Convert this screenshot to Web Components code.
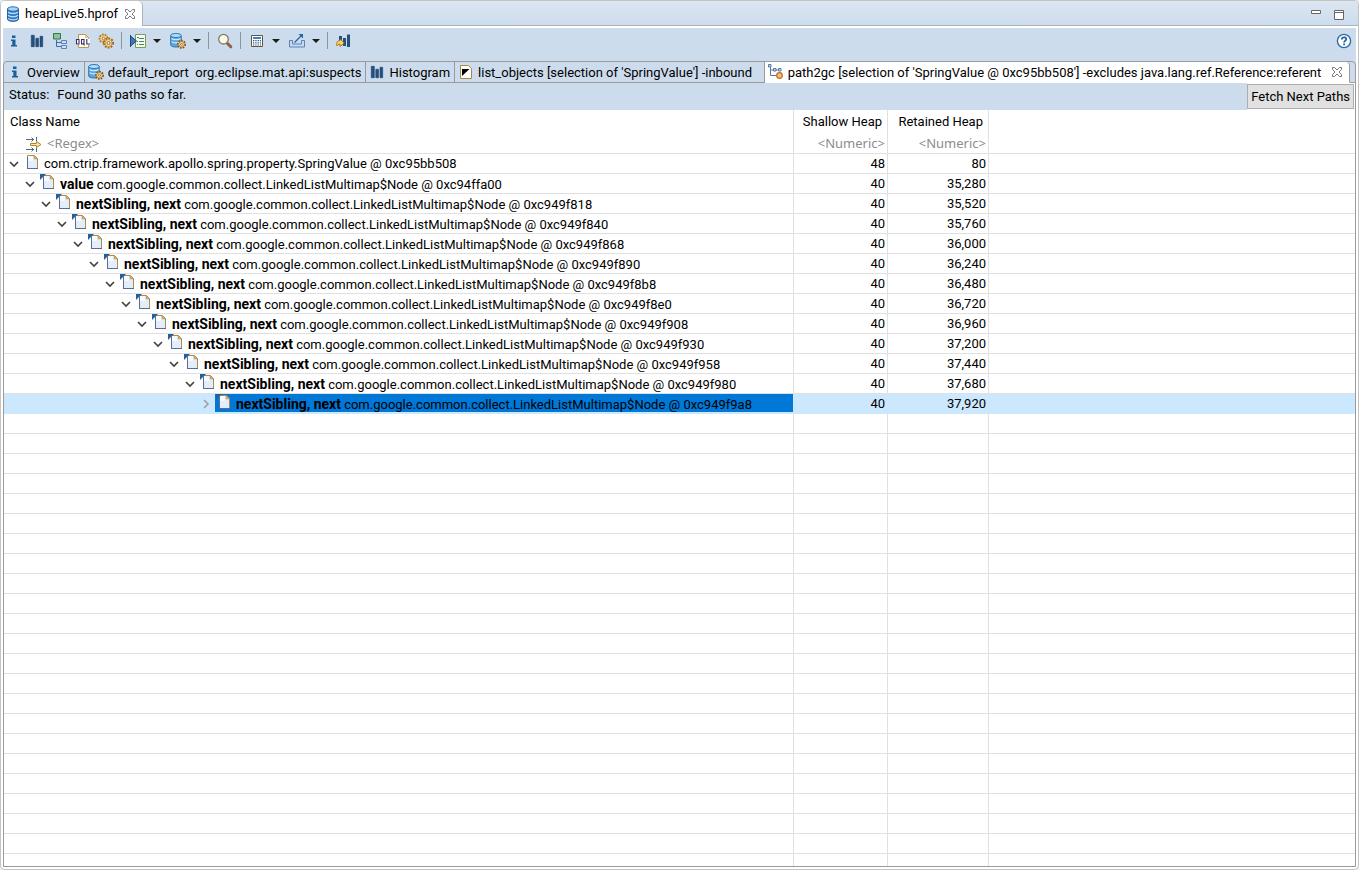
<!DOCTYPE html>
<html lang="en">
<head>
<meta charset="utf-8">
<title>heapLive5.hprof - Memory Analyzer</title>
<style>
  html, body { height: 100%; margin: 0; }
  body { background: #e4eaf4; font: 13px/20px Roboto, "Noto Sans", sans-serif; color: #000; }
</style>
</head>
<body>
<mat-editor></mat-editor>

<script>
const ICONS = {
  db: `<path fill="#2f78c4" stroke="#1c5a9e" d="M2.500 3v10c0 1.400 2.300 2.300 5.500 2.300s5.500-.9 5.500-2.300V3z"/><ellipse cx="8" cy="3" rx="5.500" ry="2.200" fill="#a9d4f5" stroke="#2a6db2"/><path fill="none" stroke="#b5dcf8" stroke-width="1.400" d="M3 6c.8 1 2.600 1.500 5 1.500s4.200-.5 5-1.500M3 9.200c.8 1 2.600 1.500 5 1.500s4.200-.5 5-1.500M3 12.400c.8 1 2.600 1.500 5 1.500s4.200-.5 5-1.500"/>`,
  info: `<path fill="#1d5f9c" d="M6 2.500h3.500v2.500H6zM5 6.500h4.500V12H11v1.500H5V12h1.300V8H5z"/>`,
  bars: `<path fill="#24507f" stroke="#1b3f6b" stroke-width=".6" d="M2.300 2.300h3v11.400h-3zM6.800 5.300h2.700v8.400H6.800zM11 3.300h2.700v10.400H11z"/>`,
  tree: `<path fill="none" stroke="#3f6cab" d="M4.500 7v6.500H10M4.500 9.500H10"/><path fill="#8cc49a" stroke="#33784a" d="M1.500.5h7v5.500h-7z"/><path fill="#cfe0f4" stroke="#5b83bb" d="M9.500 7.500h5v3h-5zM9.500 12.500h5v3h-5z"/>`,
  oql: `<path fill="#fffdf3" stroke="#b59a50" d="M3.500 1.500h7l3 3v10h-10z"/><path fill="#e9c878" d="M10 1.500v3.500h3.500z"/><path fill="#fff" d="M1 6h14v6H1z"/><path fill="none" stroke="#3b2b66" stroke-width="1.100" d="M1.500 6.500H4v4.500H1.500zM6.500 6.500H9v4.500H6.500zM8 10l1.500 2.500M11.800 6v5H15"/>`,
  gears: `<circle cx="5.500" cy="5.500" r="4" fill="#f3d591" stroke="#a8752a" stroke-width="1.800" stroke-dasharray="1.700 1.100"/><circle cx="5.500" cy="5.500" r="1.300" fill="#fff" stroke="#a8752a"/><circle cx="10.500" cy="10" r="4.600" fill="#f7dfa4" stroke="#9a6420" stroke-width="1.900" stroke-dasharray="1.800 1.200"/><circle cx="10.500" cy="10" r="3.500" fill="#f7dfa4" stroke="#b98532" stroke-width=".8"/><circle cx="10.500" cy="10" r="1.500" fill="#fff" stroke="#9a6420"/>`,
  query: `<path fill="#f4fbef" stroke="#7f9a52" d="M5.500 1.500h10v13h-10z"/><path stroke="#48876a" d="M9 5.500h5M9 8.500h5M9 11.500h5M7 4.500h2M7 8.500h1M7 11.500h1"/><path fill="#3b78b6" stroke="#174a80" d="M.5 3v10l6-5z"/><path stroke="#174a80" d="M.5 2v12"/>`,
  dbgear: `<path fill="#5aa6dd" stroke="#2d75b8" d="M.7 2.500v9.500c0 1 2.100 2 5.300 2s5.200-1 5.200-2V2.500z"/><ellipse cx="6" cy="2.500" rx="5.300" ry="2" fill="#b9dff8" stroke="#2d75b8"/><path fill="none" stroke="#c8e8fc" stroke-width="1.200" d="M1.500 5.500c1.500 1.500 7.500 1.500 9 0M1.500 8.700c1.500 1.500 7.500 1.500 9 0"/><circle cx="11.500" cy="11.300" r="3.600" fill="#f7dfa4" stroke="#86571c" stroke-width="1.800" stroke-dasharray="1.600 1.100"/><circle cx="11.500" cy="11.300" r="2.800" fill="#f9e3b4" stroke="#9d6a26" stroke-width=".8"/><circle cx="11.500" cy="11.300" r="1" fill="#fff" stroke="#86571c" stroke-width=".8"/>`,
  search: `<path stroke="#8a5f45" stroke-width="3" stroke-linecap="round" d="M10.500 10.500l3.300 3.300"/><circle cx="6.500" cy="6.200" r="4.800" fill="#fbf8e6" stroke="#80796a" stroke-width="1.300"/>`,
  calc: `<path fill="#fff" stroke="#5f563c" d="M2.500 2.500h11v11h-11z"/><path fill="#3d83bd" d="M4 4h8v2H4z"/><path stroke="#2e5573" stroke-width="1.200" stroke-dasharray="1.300 1" d="M4 7.700h8M4 9.900h8M4 12h8"/>`,
  exp: `<path fill="#c6daf0" stroke="#5b83b5" d="M.5 7.500h3v3.500h9V7.500h3v6.500H.5z"/><path fill="none" stroke="#2367a6" stroke-width="1.300" d="M5.500 9.500l7-7"/><path fill="#2367a6" d="M9.500 1H14v4.500z"/>`,
  histnext: `<path fill="#24507f" d="M3 3h3v6H3zM7 5h3v8H7zM11 1.500h3V14h-3z"/><path fill="#f8d669" stroke="#a87417" d="M4 7.500c-2.500.3-4 2-3 5.300.5-1 1.500-1.600 3-1.600v2.300l4.200-3.500L4.500 6.200z"/>`,
  help: `<circle cx="8" cy="8" r="6.600" fill="#fff" stroke="#2f6ca5" stroke-width="1.400"/><path fill="none" stroke="#2a659f" stroke-width="1.800" d="M5.800 6.500c0-3 4.500-2.800 4.500-.4 0 1.500-2.200 1.700-2.200 3.300"/><path fill="#2a659f" d="M7.200 10.500H9v1.700H7.200z"/>`,
  inbound: `<path fill="#fffef6" stroke="#a68a4a" d="M2.500 1.500h8l3 3v10h-11z"/><path fill="#fff" d="M4 5h8v7H4z"/><path fill="#000" d="M4 5h7.500L4 12z"/>`,
  path: `<path fill="none" stroke="#5678a8" d="M2.500 3v8.500H9M2.500 6H12"/><path fill="#c5dbf3" stroke="#5678a8" d="M.5.500H3V3H.5zM5.500 4.500H8V7H5.500zM10.500 4.500H13V7h-2.500z"/><circle cx="11.500" cy="11.500" r="2.800" fill="#fbbd76" stroke="#bd6c20" stroke-width="1.200"/>`,
  page: `<path fill="#e3edfb" stroke="#ab8c4c" d="M3.500 1.500h7l3 3v10h-10z"/><path fill="#fff" d="M4 2h5v5H4z" opacity=".7"/><path fill="#e3bd67" stroke="#ab8c4c" stroke-width=".7" d="M10.200 1.700v3.100h3.100z"/><path stroke="#5d6b94" d="M3.500 3v12M3 14.500h11"/>`,
  pageref: `<path fill="#e3edfb" stroke="#ab8c4c" d="M3.500 1.500h7l3 3v10h-10z"/><path fill="#fff" d="M4 2h5v5H4z" opacity=".7"/><path fill="#e3bd67" stroke="#ab8c4c" stroke-width=".7" d="M10.200 1.700v3.100h3.100z"/><path stroke="#5d6b94" d="M3.500 3v12M3 14.500h11"/><path fill="#22619c" d="M0 0h6L0 6z"/>`,
  filter: `<path fill="none" stroke="#4d6683" d="M0 3.500h8M0 13.500h8M5.500 1.500l2 2-2 2M5.500 11.500l2 2-2 2M10.500 1v4M10.500 12v4"/><path fill="#fbe7b0" stroke="#b58422" d="M4.500 7.500h6v-2l4.500 3-4.500 3v-2h-6z"/>`,
  open: `<path fill="none" stroke="#404040" stroke-width="1.600" d="M4 6l4 4 4-4"/>`,
  closed: `<path fill="none" stroke="#a0a0a0" stroke-width="1.600" d="M6 4l4 4-4 4"/>`,
  close: `<path fill="#fff" stroke="#777" d="M3.500 3.500h2L8 6l2.500-2.500h2v2L10 8l2.500 2.500v2h-2L8 10l-2.500 2.500h-2v-2L6 8 3.500 5.500z"/>`,
  arrow: `<path fill="#1c1c1c" d="M4 6h8L8 10z"/>`,
  min: `<path fill="#fff" stroke="#666" d="M3.500 3.500h9v3h-9z"/>`,
  max: `<path fill="#fff" stroke="#666" d="M3.500 3.500h9v9h-9zM3.500 5.500h9"/>`
};

class MatIcon extends HTMLElement {
  connectedCallback() {
    if (this.shadowRoot) return;
    this.attachShadow({ mode: "open" }).innerHTML = `
      <style>:host{display:block;flex:none;width:16px;height:16px;white-space:normal} svg{display:block}</style>
      <svg width="16" height="16" viewBox="0 0 16 16" aria-hidden="true">${ICONS[this.getAttribute("name")]}</svg>`;
  }
}
customElements.define("mat-icon", MatIcon);

class ToolButton extends HTMLElement {
  connectedCallback() {
    if (this.shadowRoot) return;
    const label = this.getAttribute("label");
    const menu = this.hasAttribute("menu");
    this.attachShadow({ mode: "open" }).innerHTML = `
      <style>
        :host{display:flex;flex:none}
        :host([menu]) .main{width:24px}
        button{all:unset;box-sizing:border-box;display:flex;justify-content:center;align-items:center;width:23px;height:24px;overflow:hidden}
        button:hover{background:#e3edf8}
        .drop{width:14px}
      </style>
      <button class="main" aria-label="${label}"><mat-icon name="${this.getAttribute("icon")}"></mat-icon></button>
      ${menu ? `<button class="drop" aria-label="${label} menu"><mat-icon name="arrow"></mat-icon></button>` : ""}`;
  }
}
customElements.define("tool-button", ToolButton);

class MatToolbar extends HTMLElement {
  connectedCallback() {
    if (this.shadowRoot) return;
    this.attachShadow({ mode: "open" }).innerHTML = `
      <style>
        :host{display:flex;align-items:center;height:25px;margin:0 1px 0 -1px;padding-bottom:8px}
        .sep{flex:none;width:1px;height:17px;margin:0 4px;background:#8d959e}
        .pair{display:flex;gap:2px}
        .end{margin-left:auto}
      </style>
      <tool-button icon="info" label="Overview"></tool-button>
      <tool-button icon="bars" label="Histogram"></tool-button>
      <tool-button icon="tree" label="Dominator tree"></tool-button>
      <tool-button icon="oql" label="Object query"></tool-button>
      <tool-button icon="gears" label="Thread overview"></tool-button>
      <span class="sep"></span>
      <div class="pair">
        <tool-button icon="query" label="Run reports" menu></tool-button>
        <tool-button icon="dbgear" label="Query browser" menu></tool-button>
      </div>
      <span class="sep"></span>
      <tool-button icon="search" label="Find object"></tool-button>
      <span class="sep"></span>
      <div class="pair">
        <tool-button icon="calc" label="Calculate retained size" menu></tool-button>
        <tool-button icon="exp" label="Export" menu></tool-button>
      </div>
      <span class="sep"></span>
      <tool-button icon="histnext" label="Compare"></tool-button>
      <tool-button class="end" icon="help" label="Help"></tool-button>`;
  }
}
customElements.define("mat-toolbar", MatToolbar);

class PageTab extends HTMLElement {
  connectedCallback() {
    if (this.shadowRoot) return;
    const active = this.hasAttribute("active");
    this.attachShadow({ mode: "open" }).innerHTML = `
      <style>
        :host{display:flex;flex:none;align-items:center;box-sizing:border-box;height:21px;padding:0 4px 0 3px;border-right:1px solid #9a9a9a;border-bottom:1px solid #9a9a9a}
        :host([wide]){flex:1 0 auto}
        :host([active]){background:#fff;border-bottom-color:#fff;border-radius:0 4px 0 0}
        button{all:unset;display:flex;gap:4px;white-space:pre;height:20px;line-height:22px}
        mat-icon{margin-top:2px}
        .x{margin-left:auto}
      </style>
      <button role="tab" aria-selected="${active}"><mat-icon name="${this.getAttribute("icon")}"></mat-icon><slot></slot></button>
      ${active ? `<button class="x" aria-label="Close page"><mat-icon name="close"></mat-icon></button>` : ""}`;
  }
}
customElements.define("page-tab", PageTab);

class StatusBar extends HTMLElement {
  connectedCallback() {
    if (this.shadowRoot) return;
    this.attachShadow({ mode: "open" }).innerHTML = `
      <style>
        :host{display:flex;height:27px;background:#fff}
        .msg{flex:1;display:flex;gap:8px;padding:2px 5px;background:#cddcec}
        button{flex:none;box-sizing:border-box;height:25px;margin:1px 1px 0 0;padding:0 3px;border:1px solid #adadad;border-radius:0;outline:0;background:#e1e1e1;font:inherit;color:inherit}
      </style>
      <div class="msg"><span>Status:</span><span><slot></slot></span></div>
      <button>Fetch Next Paths</button>`;
  }
}
customElements.define("status-bar", StatusBar);

const NODE = "com.google.common.collect.LinkedListMultimap$Node @ ";
const ROWS = [
  ["", "com.ctrip.framework.apollo.spring.property.SpringValue @ 0xc95bb508", "48", "80"],
  ["value", NODE + "0xc94ffa00", "40", "35,280"],
  ...[["818","35,520"],["840","35,760"],["868","36,000"],["890","36,240"],["8b8","36,480"],["8e0","36,720"],
      ["908","36,960"],["930","37,200"],["958","37,440"],["980","37,680"],["9a8","37,920"]]
    .map(([id, heap]) => ["nextSibling, next", NODE + "0xc949f" + id, "40", heap])
];

class HeapTree extends HTMLElement {
  connectedCallback() {
    if (this.shadowRoot) return;
    const last = ROWS.length - 1;
    const rows = ROWS.map(([field, name, shallow, retained], i) => `
      <tr class="${i === last ? "selected" : ""}">
        <td><div class="node" style="--depth:${i}">
          <button aria-label="${i === last ? "Expand" : "Collapse"}"><mat-icon name="${i === last ? "closed" : "open"}"></mat-icon></button>
          <div class="label"><mat-icon name="${i ? "pageref" : "page"}"></mat-icon><span>${field ? `<b>${field}</b> ` : ""}${name}</span></div>
        </div></td>
        <td>${shallow}</td><td>${retained}</td><td></td>
      </tr>`).join("");
    this.attachShadow({ mode: "open" }).innerHTML = `
      <style>
        :host{display:flex;flex-direction:column;min-height:0;overflow:hidden;background:#fff;--line:#e0e0e0}
        table{flex:none;width:100%;table-layout:fixed;border-collapse:separate;border-spacing:0}
        .c1{width:790px}.c2{width:94px}.c3{width:101px}
        th,td{box-sizing:border-box;padding:0 2px 0 0;text-align:right;font-weight:400;white-space:nowrap;border-right:1px solid var(--line)}
        th:first-child,td:first-child{text-align:left;padding:0}
        th:last-child,td:last-child{border-right:0}
        td{height:20px;line-height:19px;border-bottom:1px solid var(--line)}
        thead th{height:24px;padding:0 5px 0 6px}
        thead th:first-child{padding:0 5px 0 6px}
        .filter{display:flex;align-items:center;gap:5px;padding-left:22px}
        input{all:unset;box-sizing:border-box;width:100%;height:19px;line-height:19px;text-align:inherit;font-family:"Noto Sans",sans-serif}
        input::placeholder{color:#8c8c8c;opacity:1}
        .node{display:flex;height:19px;padding-left:calc(2px + 16px * var(--depth))}
        .node button{all:unset;flex:none;display:flex;align-items:center;width:17px}
        .label{display:flex;gap:4px;height:18px;padding-left:1px;line-height:20px}
        b{font-size:14px}
        .selected td{background:#cce8ff;border-color:#cce8ff}
        .selected .label{flex:1;background:#0078d7}
        .rest{flex:1;display:flex;background:repeating-linear-gradient(#fff 0 19px,var(--line) 19px 20px)}
        .rest i{box-sizing:border-box;flex:none;border-right:1px solid var(--line)}
      </style>
      <table>
        <colgroup><col class="c1"><col class="c2"><col class="c3"><col></colgroup>
        <thead><tr><th>Class Name</th><th>Shallow Heap</th><th>Retained Heap</th><th></th></tr></thead>
        <tbody>
          <tr><td><div class="filter"><mat-icon name="filter"></mat-icon><input aria-label="Class name filter" placeholder="&lt;Regex&gt;"></div></td>
            <td><input aria-label="Shallow heap filter" placeholder="&lt;Numeric&gt;"></td>
            <td><input aria-label="Retained heap filter" placeholder="&lt;Numeric&gt;"></td><td></td></tr>
          ${rows}
        </tbody>
      </table>
      <div class="rest"><i class="c1"></i><i class="c2"></i><i class="c3"></i></div>`;
  }
}
customElements.define("heap-tree", HeapTree);

class MatEditor extends HTMLElement {
  connectedCallback() {
    if (this.shadowRoot) return;
    this.attachShadow({ mode: "open" }).innerHTML = `
      <style>
        :host{display:flex;flex-direction:column;box-sizing:border-box;height:100%;overflow:hidden;background:#fff;border:1px solid #c3c3c3;border-radius:5px}
        .files{flex:none;display:flex;height:24px;background:linear-gradient(#dbe6f2,#cddcec);border-bottom:1px solid #a9b3be}
        .file{display:flex;align-items:center;gap:4px;padding:0 4px;height:25px;background:#fff;border-right:1px solid #a9b3be;border-radius:0 5px 0 0}
        .file button,.win button{all:unset;display:block}
        .win{display:flex;gap:7px;margin-left:auto;padding:3px 11px 0 0}
        .body{flex:1;display:flex;flex-direction:column;min-height:0;margin:2px;background:#cddcec}
        .pages{flex:1;display:flex;flex-direction:column;min-height:0;border:1px solid #9a9a9a;border-radius:4px 4px 0 0}
        .tabs{flex:none;display:flex}
        .tabs i{flex:none;width:5px;border-bottom:1px solid #9a9a9a}
        status-bar{flex:none}
        heap-tree{flex:1}
      </style>
      <div class="files">
        <div class="file"><mat-icon name="db"></mat-icon><span>heapLive5.hprof</span><button aria-label="Close editor"><mat-icon name="close"></mat-icon></button></div>
        <div class="win"><button aria-label="Minimize"><mat-icon name="min"></mat-icon></button><button aria-label="Maximize"><mat-icon name="max"></mat-icon></button></div>
      </div>
      <div class="body">
        <mat-toolbar></mat-toolbar>
        <div class="pages">
          <div class="tabs" role="tablist">
            <page-tab icon="info">Overview</page-tab>
            <page-tab icon="dbgear">default_report  org.eclipse.mat.api:suspects</page-tab>
            <page-tab icon="bars">Histogram</page-tab>
            <page-tab icon="inbound" wide>list_objects [selection of 'SpringValue'] -inbound</page-tab>
            <page-tab icon="path" wide active>path2gc [selection of 'SpringValue @ 0xc95bb508'] -excludes java.lang.ref.Reference:referent</page-tab>
            <i></i>
          </div>
          <status-bar>Found 30 paths so far.</status-bar>
          <heap-tree></heap-tree>
        </div>
      </div>`;
  }
}
customElements.define("mat-editor", MatEditor);
</script>
</body>
</html>
